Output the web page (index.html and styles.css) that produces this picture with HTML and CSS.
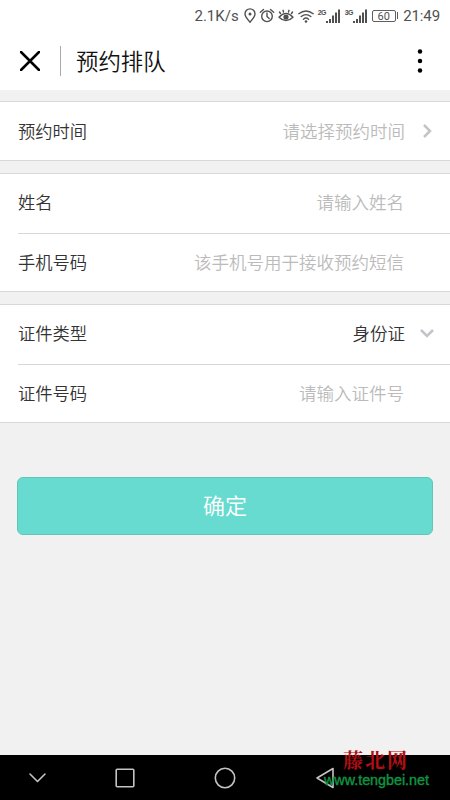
FILE: index.html
```html
<!DOCTYPE html>
<html lang="zh-CN">
<head>
<meta charset="utf-8">
<title>预约排队</title>
<link rel="stylesheet" href="styles.css">
</head>
<body>
<div class="screen">
  <div class="status">
    <span class="speed">2.1K/s</span>
    <svg class="pin" width="12" height="16" viewBox="0 0 12 16"><path d="M6 14.2C3.5 11 1 8.7 1 5.9a5 5 0 0 1 10 0C11 8.7 8.500 11 6 14.200Z"/><circle class="solid" cx="6" cy="6" r="1.500"/></svg>
    <svg class="alarm" width="16" height="16" viewBox="0 0 16 16"><circle cx="8" cy="8.300" r="5.300"/><path d="M8 5v3.500l2.200 2M1.300 4.200 4.500 1.500M14.700 4.200 11.500 1.500"/></svg>
    <svg class="eye" width="16" height="16" viewBox="0 0 16 16"><path d="M1 9.200Q8 1.500 15 9.200Q8 16 1 9.200ZM2.500 5.500 1.500 4M5.500 4 5 2.300M10.500 4 11 2.300M13.500 5.500 14.500 4"/><circle class="solid" cx="8" cy="9" r="2.600"/></svg>
    <svg class="wifi" width="16" height="16" viewBox="0 0 16 16"><path d="M.8 5.700Q8 .2 15.200 5.700M3.200 8.500Q8 4.700 12.800 8.500M5.500 11.200Q8 9 10.500 11.200"/><circle class="solid" cx="8" cy="13.500" r="1.300"/></svg>
    <div class="signal"><span>2G</span><svg width="14" height="14" viewBox="0 0 14 14"><path class="bars" d="M1 12v2M4 10v4M7 6.500V14M10 3.500V14M13 .5V14"/></svg></div>
    <div class="signal second"><span>3G</span><svg width="14" height="14" viewBox="0 0 14 14"><path class="bars" d="M1 12v2M4 10v4M7 6.500V14M10 3.500V14M13 .5V14"/></svg></div>
    <div class="battery">60</div><i class="battery-tip"></i>
    <span class="clock">21:49</span>
  </div>
  <header class="header">
    <svg class="close" width="20" height="20" viewBox="0 0 20 20"><path d="M1 1 19 19M19 1 1 19"/></svg>
    <i class="rule"></i>
    <h1>预约排队</h1>
    <svg class="more" width="6" height="24" viewBox="0 0 6 24"><circle cx="3" cy="2.500" r="2.250"/><circle cx="3" cy="12" r="2.250"/><circle cx="3" cy="21.500" r="2.250"/></svg>
  </header>
  <main>
    <section class="card">
      <div class="row"><span>预约时间</span><span class="hint picker">请选择预约时间</span><svg class="chevron right" width="10" height="14" viewBox="0 0 10 14"><path d="M2 1 8 7 2 13"/></svg></div>
    </section>
    <section class="card">
      <div class="row"><span>姓名</span><span class="hint">请输入姓名</span></div>
      <div class="row"><span>手机号码</span><span class="hint">该手机号用于接收预约短信</span></div>
    </section>
    <section class="card">
      <div class="row"><span>证件类型</span><span class="value picker">身份证</span><svg class="chevron" width="14" height="10" viewBox="0 0 14 10"><path d="M1 2 7 8 13 2"/></svg></div>
      <div class="row"><span>证件号码</span><span class="hint">请输入证件号</span></div>
    </section>
    <button class="confirm">确定</button>
  </main>
  <nav class="nav">
    <svg class="down" width="20" height="20" viewBox="0 0 20 20"><path d="M3 6 10.500 13.500 18 6"/></svg>
    <svg width="20" height="20" viewBox="0 0 20 20"><rect x="1.200" y="1.200" width="17.600" height="17.600" rx="1"/></svg>
    <svg width="22" height="22" viewBox="0 0 22 22"><circle cx="11" cy="11" r="9.700"/></svg>
    <svg width="20" height="22" viewBox="0 0 20 22"><path d="M18 1.500V20.500L2 11Z"/></svg>
    <div class="watermark"><b>藤北网</b><span>www.tengbei.net</span></div>
  </nav>
</div>
</body>
</html>
```
FILE: styles.css
```css
* { box-sizing: border-box; }

body {
  margin: 0;
  background: #f1f1f1;
  color: #333;
  font-family: "Noto Sans CJK SC", sans-serif;
}

.screen {
  display: flex;
  flex-direction: column;
  width: 450px;
  height: 800px;
  overflow: hidden;
}

svg {
  flex: none;
  fill: none;
  stroke-linecap: round;
  stroke-linejoin: round;
}

.status {
  display: flex;
  align-items: center;
  height: 31px;
  padding-right: 10px;
  justify-content: flex-end;
  background: #fff;
  color: #505050;
  font: 15px/31px Roboto, sans-serif;
}

.status > span { padding-top: 1px; }
.status svg { stroke: #505050; stroke-width: 1.4; }
.status .solid { fill: #505050; stroke: none; }
.status .bars { stroke-width: 2; stroke-linecap: butt; }
.speed { margin-right: 5px; }
.pin { margin-right: 3px; }
.alarm { margin-right: 3px; }
.eye { margin-right: 4px; }
.wifi { margin-right: 4px; }

.signal { display: flex; align-items: flex-start; height: 14px; }
.signal.second { margin-left: 5px; }
.signal span {
  width: 8px;
  font: bold 7px/7px "Liberation Sans", sans-serif;
  letter-spacing: -.6px;
}

.battery {
  width: 24px;
  height: 12px;
  margin-left: 5px;
  border: 1px solid #606060;
  border-radius: 2px;
  font-size: 11px;
  line-height: 11px;
  text-align: center;
}
.battery-tip { width: 1.5px; height: 7px; margin: 0 5px 0 1px; background: #606060; }
.clock { letter-spacing: -.1px; }

.header {
  display: flex;
  align-items: center;
  height: 59px;
  padding: 0 27px 0 20px;
  background: #fff;
}
.close { stroke: #000; stroke-width: 2.5; }
.rule { width: 1px; height: 30px; margin: 0 15px 0 20px; background: #aaa; }
.header h1 { margin: 0; padding-bottom: 2px; color: #111; font-size: 22.4px; font-weight: 350; line-height: 32px; }
.more { margin-left: auto; fill: #000; }

main { flex: 1; padding-top: 11px; }

.card {
  margin-bottom: 12px;
  padding-left: 18px;
  border: solid #d8d8d8;
  border-width: 1px 0;
  background: #fff;
}
.row {
  display: flex;
  align-items: center;
  height: 59px;
  padding: 0 46px 3px 0;
  font-size: 17.3px;
  font-weight: 350;
  line-height: 26px;
}
.row:only-child { height: 58px; padding-bottom: 0; }
.row + .row { height: 58px; border-top: 1px solid #d8d8d8; padding-bottom: 2px; }
.hint, .value { margin-left: auto; font-size: 17.5px; }
.hint { color: #bbb; }
.row:has(.chevron) { padding-right: 16px; }
.picker { margin-right: 15px; }
.chevron { stroke: #c4c4c8; stroke-width: 2.5; stroke-linecap: butt; stroke-linejoin: miter; }
.chevron.right { margin: 0 2px; }

.confirm {
  display: block;
  width: 416px;
  height: 58px;
  margin: 54px 17px 0;
  padding: 0 0 3px;
  border: 1px solid #61c5b9;
  border-radius: 6px;
  background: #67dbcf;
  color: #fff;
  font: 350 22px/53px "Noto Sans CJK SC", sans-serif;
}

.nav {
  position: relative;
  display: flex;
  align-items: center;
  gap: 79px;
  height: 45px;
  padding-left: 27px;
  background: #000;
}
.nav svg { stroke: #c4c4c4; stroke-width: 1.6; }
.nav .down { margin-right: -11px; }

.watermark {
  position: absolute;
  top: -7px;
  left: 324px;
  white-space: nowrap;
}
.watermark b {
  display: block;
  margin-left: 19px;
  color: #b10f14;
  font: 700 20px/24px "Noto Serif CJK SC", "Noto Sans CJK SC", serif;
  letter-spacing: 2px;
}
.watermark span {
  display: block;
  color: #119443;
  font: 14.3px/16px "Liberation Sans", sans-serif;
  -webkit-text-stroke: .4px #119443;
}
```
